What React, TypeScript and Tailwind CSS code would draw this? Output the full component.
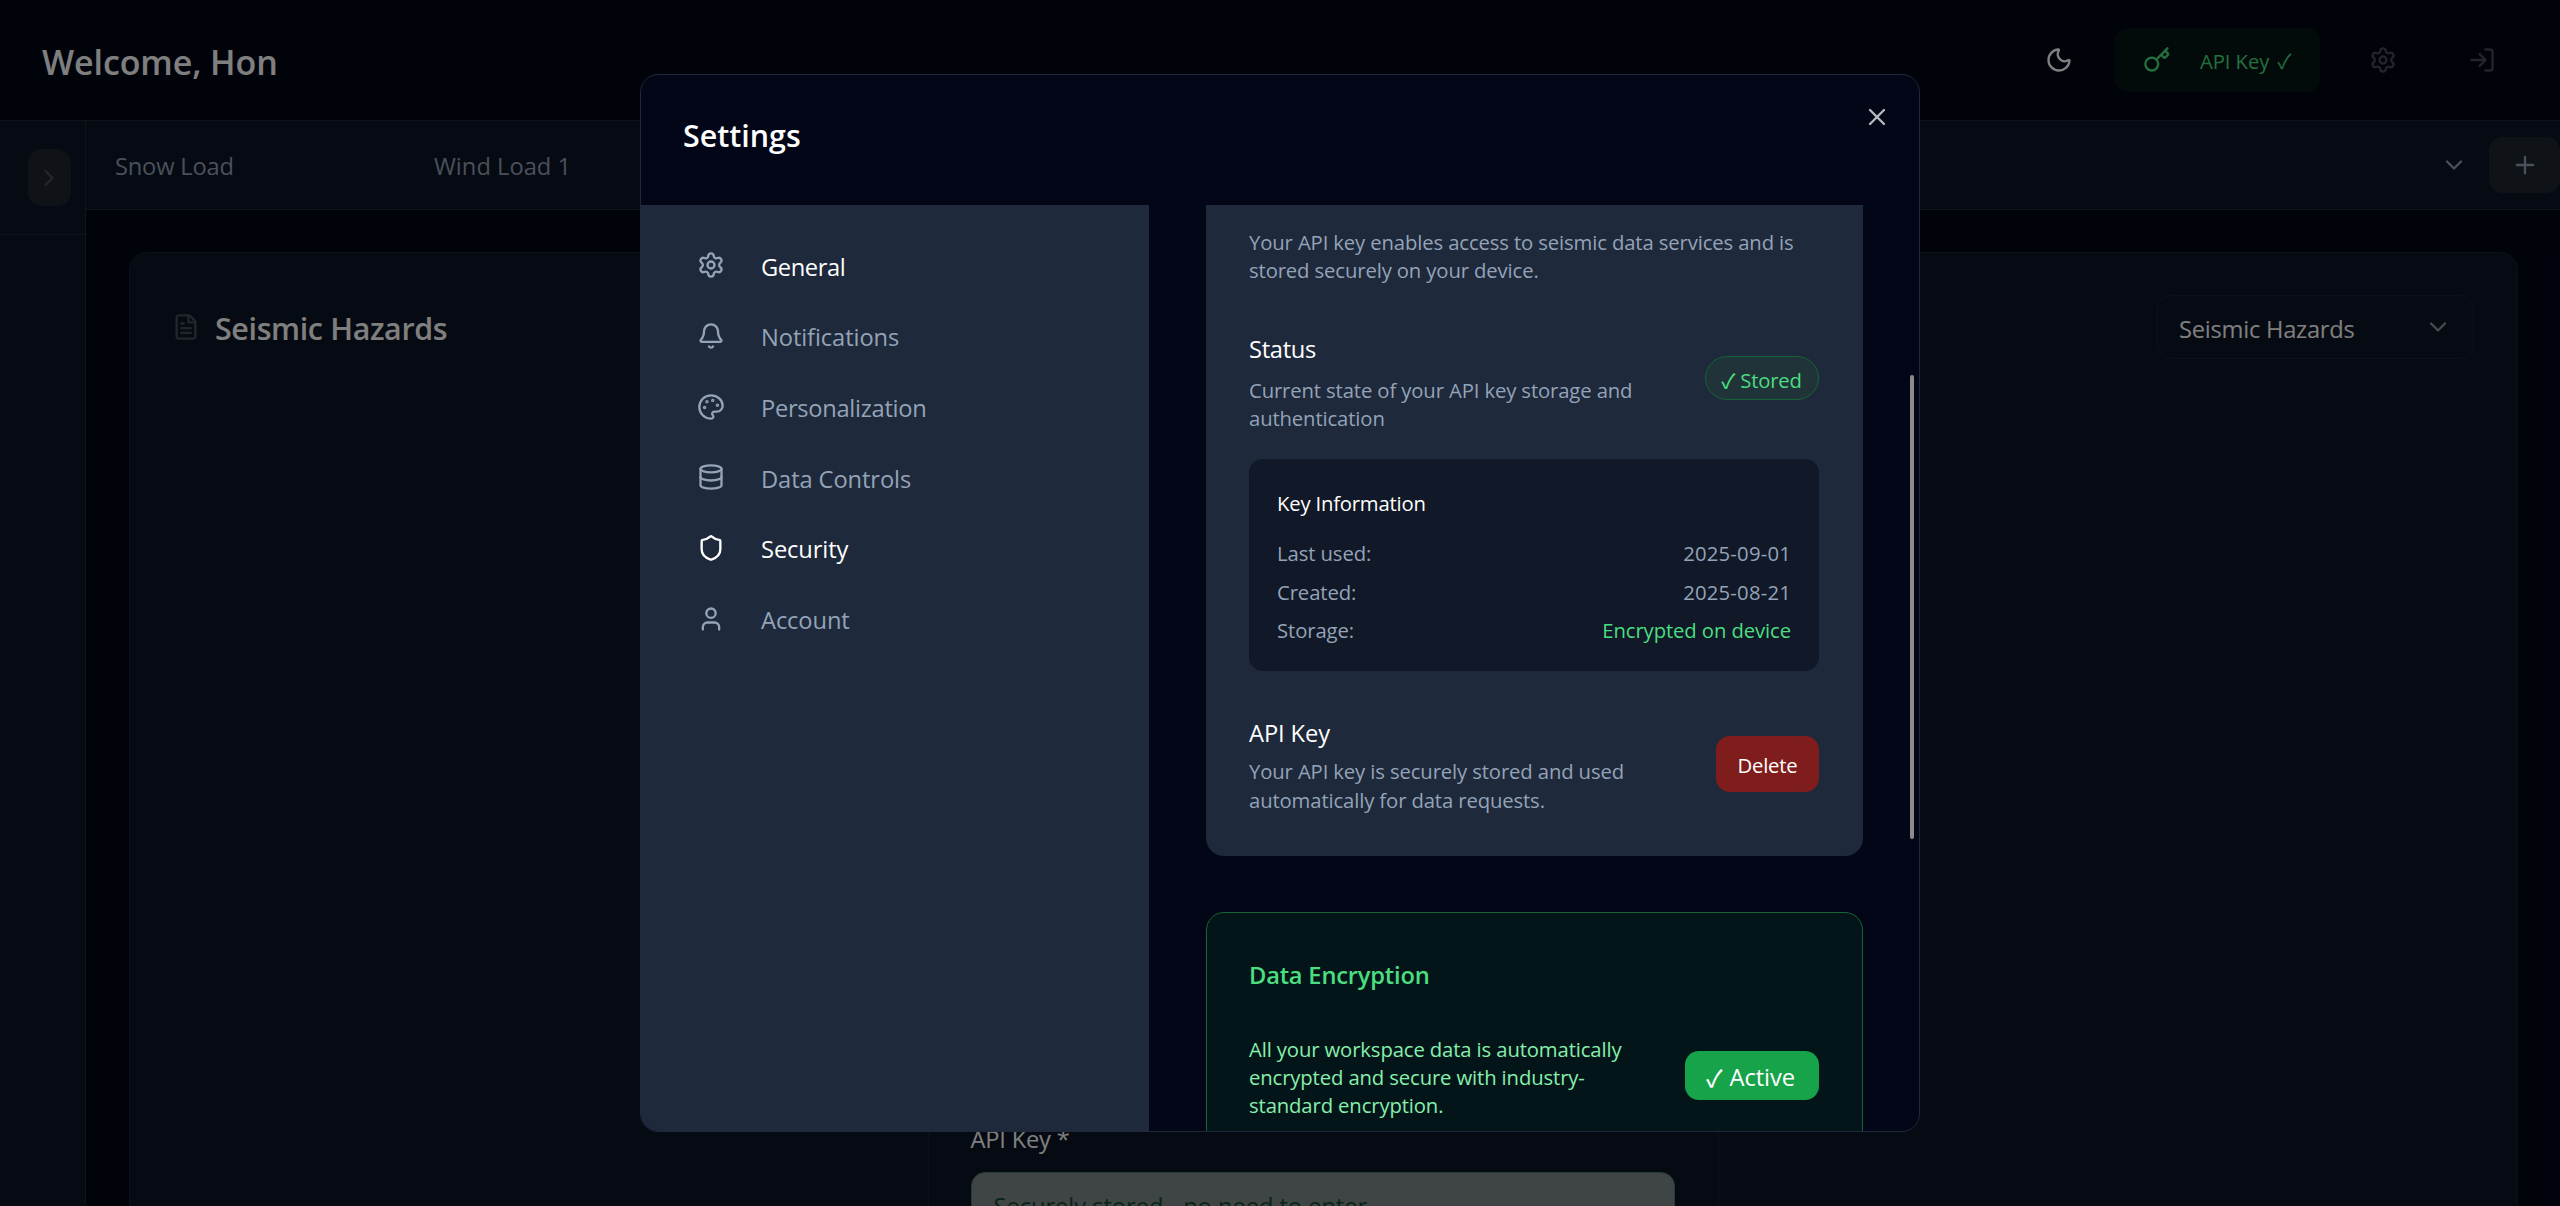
import type { ReactNode } from "react";
import {
  Bell,
  ChevronDown,
  ChevronRight,
  Database,
  FileText,
  Key,
  LogIn,
  Moon,
  Palette,
  Plus,
  Settings,
  Shield,
  User,
  X,
} from "lucide-react";

const icon = "size-7 shrink-0";

function Check({ className = "" }: { className?: string }) {
  return (
    <span className={`inline-block font-['Noto_Sans_CJK_SC'] leading-none ${className}`}>✓</span>
  );
}

function Header() {
  return (
    <header className="flex h-[121px] shrink-0 items-center border-b border-[#202633] pl-[42px] pr-[65px]">
      <h1 className="flex-1 pt-[5px] text-[34px] font-semibold tracking-[-0.1px] text-white">
        Welcome, Hon
      </h1>
      <div className="flex items-center">
        <Moon className={`${icon} mr-[42px] text-white`} />
        <div className="flex h-16 w-[205px] items-center rounded-[14px] bg-[#061614] pl-[28px] text-[#48de80]">
          <Key className={icon} />
          <span className="ml-[29px] whitespace-nowrap pt-[3px] text-[20.3px] tracking-[-0.1px]">
            API Key <Check className="ml-[3px]" />
          </span>
        </div>
        <Settings className={`${icon} ml-[49px] text-[#454b57]`} />
        <LogIn className={`${icon} ml-[71px] -mr-px text-[#454b57]`} />
      </div>
    </header>
  );
}

function Rail() {
  return (
    <aside className="w-[86px] shrink-0 border-r border-[#202633] bg-[#0c1425]">
      <div className="flex h-[114px] items-center justify-end border-b border-[#202633] pr-[14px]">
        <button className="flex h-[57px] w-[43px] items-center justify-center rounded-[14px] bg-[#1f242e]">
          <ChevronRight className={`${icon} -ml-px text-[#484d57]`} />
        </button>
      </div>
    </aside>
  );
}

function TabBar() {
  return (
    <nav className="flex h-[89px] shrink-0 items-center border-b border-[#202633] bg-[#0c1425] pl-[29px] text-[23.7px] tracking-[-0.2px] text-[#94a0b5]">
      <span className="w-[319px] pt-[3px]">Snow Load</span>
      <span className="flex-1 pt-[3px] tracking-[0px]">Wind Load 1</span>
      <ChevronDown className={`${icon} mr-[21px]`} />
      <button className="flex h-14 w-[71px] items-center justify-center rounded-[14px] bg-[#1f242e]">
        <Plus className={icon} />
      </button>
    </nav>
  );
}

function Workspace() {
  return (
    <main className="flex-1 overflow-hidden px-[43px] pt-[42px]">
      <section className="h-[1100px] w-[2389px] rounded-t-[18px] border border-[#1b212c] bg-[#0c1425] pl-[42px] pr-[43px] pt-[42px]">
        <div className="flex h-16 items-center">
          <FileText className={`${icon} text-[#454b57]`} />
          <h2 className="ml-[15px] flex-1 pt-[4px] text-[30.4px] font-semibold tracking-[-0.35px] text-white">
            Seismic Hazards
          </h2>
          <div className="flex h-16 w-[317px] items-center justify-between rounded-[14px] border border-[#1b212c] px-[21px] text-[23.7px] tracking-[-0.25px] text-white">
            <span className="pt-[5px]">Seismic Hazards</span>
            <ChevronDown className={`${icon} text-[#8e9299]`} />
          </div>
        </div>
        <div className="mx-auto mt-[400px] h-[500px] w-[791px] border-x border-[#1b212c] px-[42px] pt-[362px]">
          <p className="h-[51px] text-[23.7px] leading-[36px] tracking-[-0.2px] text-white">
            API Key *
          </p>
          <div className="h-[66px] w-[704px] rounded-[14px] border border-[#4c7a62] bg-[#7e888a] pl-[22px] pt-[15px] text-[23.7px] leading-[36px] tracking-[-0.05px] text-[#0f4a30]">
            Securely stored - no need to enter
          </div>
        </div>
      </section>
    </main>
  );
}

const sections = [
  { label: "General", Icon: Settings, text: "text-white tracking-[-0.4px]", tint: "text-[#94a3b8]" },
  { label: "Notifications", Icon: Bell, text: "text-[#94a3b8]", tint: "text-[#94a3b8]" },
  { label: "Personalization", Icon: Palette, text: "text-[#94a3b8] tracking-[-0.3px]", tint: "text-[#94a3b8]" },
  { label: "Data Controls", Icon: Database, text: "text-[#94a3b8]", tint: "text-[#94a3b8]" },
  { label: "Security", Icon: Shield, text: "text-white", tint: "text-white" },
  { label: "Account", Icon: User, text: "text-[#94a3b8]", tint: "text-[#94a3b8]" },
];

function SectionList() {
  return (
    <ul className="w-[508px] shrink-0 bg-[#1e293b] pl-[56px] pt-[25px] tracking-[-0.1px]">
      {sections.map(({ label, Icon, text, tint }) => (
        <li key={label} className="flex h-[70.7px] items-center">
          <Icon className={`${icon} ${tint}`} />
          <span className={`ml-[36px] pt-[4px] text-[23.7px] ${text}`}>{label}</span>
        </li>
      ))}
    </ul>
  );
}

function Note({ children, className = "" }: { children: ReactNode; className?: string }) {
  return (
    <p className={`text-[20.3px] tracking-[-0.13px] whitespace-nowrap ${className}`}>{children}</p>
  );
}

function InfoRow({ name, value, tone }: { name: string; value: string; tone: string }) {
  return (
    <div className="flex h-[38.6px] items-center justify-between text-[20.3px] tracking-[-0.1px] text-[#94a3b8]">
      <span>{name}</span>
      <span className={tone}>{value}</span>
    </div>
  );
}

function ApiKeyCard() {
  return (
    <section className="h-[651px] w-[657px] rounded-b-[18px] bg-[#1e293b] pl-[43px] pr-[44px] pt-[23px]">
      <Note className="leading-[28.4px] text-[#94a3b8]">
        Your API key enables access to seismic data services and is
        <br />
        stored securely on your device.
      </Note>
      <div className="mt-[43px] flex items-center justify-between">
        <div>
          <h3 className="h-[48px] text-[23.7px] font-medium leading-[42px] tracking-[-0.3px] text-white">
            Status
          </h3>
          <Note className="leading-[28.6px] text-[#94a3b8]">
            Current state of your API key storage and
            <br />
            authentication
          </Note>
        </div>
        <span className="mb-[4px] flex h-11 w-[114px] items-center justify-center rounded-full border border-[#166534] bg-[#1f3338] pt-[4px] text-[20.3px] font-medium tracking-[-0.2px] text-[#4ade80]">
          <Check className="mr-[5px] -ml-[1px]" />
          Stored
        </span>
      </div>
      <div className="mt-[26px] h-[212px] rounded-[14px] bg-[#111827] px-7 pt-[28px]">
        <h4 className="h-[47px] text-[20.3px] font-medium leading-[32px] tracking-[-0.2px] text-white">
          Key Information
        </h4>
        <InfoRow name="Last used:" value="2025-09-01" tone="tracking-[0.2px]" />
        <InfoRow name="Created:" value="2025-08-21" tone="tracking-[0.2px]" />
        <InfoRow name="Storage:" value="Encrypted on device" tone="text-[#4ade80]" />
      </div>
      <div className="mt-[41px] flex items-center justify-between">
        <div>
          <h3 className="h-[45px] text-[23.7px] font-medium leading-[42px] tracking-[-0.1px] text-white">
            API Key
          </h3>
          <Note className="leading-[28.6px] text-[#94a3b8]">
            Your API key is securely stored and used
            <br />
            automatically for data requests.
          </Note>
        </div>
        <button className="mt-[1px] flex h-14 w-[103px] items-center justify-center rounded-[14px] bg-[#7f1d1d] pt-[3px] text-[20.3px] font-medium tracking-[-0.2px] text-white">
          Delete
        </button>
      </div>
    </section>
  );
}

function EncryptionCard() {
  return (
    <section className="mt-[56px] h-[260px] w-[657px] rounded-[18px] border border-[#166534] bg-[#041519] pl-[42px] pr-[43px] pt-[41px]">
      <h3 className="h-[81px] text-[23.7px] font-semibold leading-[42px] tracking-[-0.2px] text-[#4ade80]">
        Data Encryption
      </h3>
      <div className="flex items-center justify-between">
        <Note className="leading-[28.2px] text-[#86efac]">
          All your workspace data is automatically
          <br />
          encrypted and secure with industry-
          <br />
          standard encryption.
        </Note>
        <span className="mb-[4px] flex h-[49px] w-[134px] items-center justify-center rounded-[14px] bg-[#16a34a] pt-[5px] text-[23.7px] font-medium tracking-[-0.1px] text-white">
          <Check className="mr-[7px] -ml-[3px]" />
          Active
        </span>
      </div>
    </section>
  );
}

function SettingsDialog() {
  return (
    <div className="flex h-[1058px] w-[1280px] flex-col overflow-hidden rounded-[18px] border border-[#1e293b] bg-[#020617]">
      <div className="flex h-[130px] shrink-0 items-start justify-between pl-[42px] pr-[28px] pt-[28px]">
        <h2 className="pt-[12px] text-[30.4px] font-semibold leading-[42px] text-white">Settings</h2>
        <X className={`${icon} text-[#b8bac0]`} />
      </div>
      <div className="flex min-h-0 flex-1">
        <SectionList />
        <div className="min-w-0 flex-1 overflow-hidden pl-[57px]">
          <ApiKeyCard />
          <EncryptionCard />
        </div>
        <div className="w-[9px] pt-[170px]">
          <div className="h-[464px] w-1 rounded-full bg-[#8b8b8b]" />
        </div>
      </div>
    </div>
  );
}

export default function App() {
  return (
    <div className="relative h-[1206px] w-[2560px] overflow-hidden bg-[#020617] font-['Open_Sans','Noto_Sans_CJK_SC',sans-serif]">
      <div className="flex h-full flex-col">
        <Header />
        <div className="flex min-h-0 flex-1">
          <Rail />
          <div className="flex min-w-0 flex-1 flex-col">
            <TabBar />
            <Workspace />
          </div>
        </div>
      </div>
      <div className="absolute inset-0 flex items-center justify-center bg-black/50">
        <SettingsDialog />
      </div>
    </div>
  );
}
